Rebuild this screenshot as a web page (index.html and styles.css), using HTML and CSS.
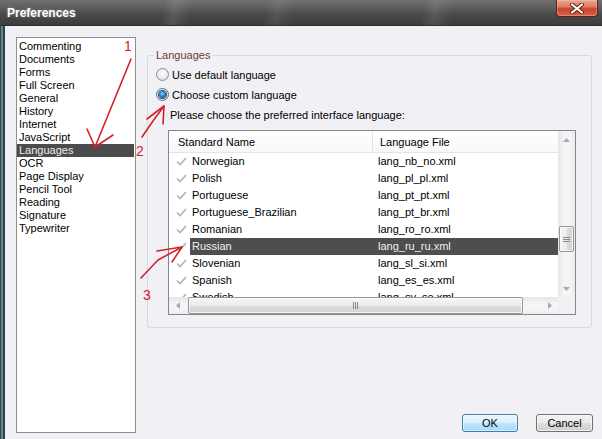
FILE: index.html
```html
<!DOCTYPE html>
<html>
<head>
<meta charset="utf-8">
<title>Preferences</title>
<link rel="stylesheet" href="styles.css">
</head>
<body>
<div class="window">
  <div class="titlebar">
    <span class="title">Preferences</span>
    <div class="close">
      <svg width="16" height="11" viewBox="0 0 16 11"><path d="M3 1.5 L13 9.5 M13 1.5 L3 9.5" stroke="#5a1e12" stroke-width="4" stroke-linecap="round" fill="none"/><path d="M3 1.5 L13 9.5 M13 1.5 L3 9.5" stroke="#ffffff" stroke-width="2.2" stroke-linecap="round" fill="none"/></svg>
    </div>
  </div>
  <div class="body">
    <div class="frame-left"></div>
    <div class="main">
      <ul class="cats">
        <li>Commenting</li>
        <li>Documents</li>
        <li>Forms</li>
        <li>Full Screen</li>
        <li>General</li>
        <li>History</li>
        <li>Internet</li>
        <li>JavaScript</li>
        <li class="sel">Languages</li>
        <li>OCR</li>
        <li>Page Display</li>
        <li>Pencil Tool</li>
        <li>Reading</li>
        <li>Signature</li>
        <li>Typewriter</li>
      </ul>
      <div class="right">
        <fieldset class="group">
          <legend>Languages</legend>
          <div class="radio-row first"><span class="radio"></span><span>Use default language</span></div>
          <div class="radio-row second"><span class="radio on"><span class="dot"></span></span><span>Choose custom language</span></div>
          <div class="prompt">Please choose the preferred interface language:</div>
          <div class="listview">
            <div class="lv-content">
              <div class="lv-header"><div class="h-name">Standard Name</div><div class="h-file">Language File</div></div>
              <div class="lv-row"><span class="chk"><svg width="11" height="9" viewBox="0 0 11 9"><path d="M1 4.5 L4 7.5 L10 1" stroke="#b2b2b2" stroke-width="1.6" fill="none"/></svg></span><span class="name">Norwegian</span><span class="file">lang_nb_no.xml</span></div>
              <div class="lv-row"><span class="chk"><svg width="11" height="9" viewBox="0 0 11 9"><path d="M1 4.5 L4 7.5 L10 1" stroke="#b2b2b2" stroke-width="1.6" fill="none"/></svg></span><span class="name">Polish</span><span class="file">lang_pl_pl.xml</span></div>
              <div class="lv-row"><span class="chk"><svg width="11" height="9" viewBox="0 0 11 9"><path d="M1 4.5 L4 7.5 L10 1" stroke="#b2b2b2" stroke-width="1.6" fill="none"/></svg></span><span class="name">Portuguese</span><span class="file">lang_pt_pt.xml</span></div>
              <div class="lv-row"><span class="chk"><svg width="11" height="9" viewBox="0 0 11 9"><path d="M1 4.5 L4 7.5 L10 1" stroke="#b2b2b2" stroke-width="1.6" fill="none"/></svg></span><span class="name">Portuguese_Brazilian</span><span class="file">lang_pt_br.xml</span></div>
              <div class="lv-row"><span class="chk"><svg width="11" height="9" viewBox="0 0 11 9"><path d="M1 4.5 L4 7.5 L10 1" stroke="#b2b2b2" stroke-width="1.6" fill="none"/></svg></span><span class="name">Romanian</span><span class="file">lang_ro_ro.xml</span></div>
              <div class="lv-row sel"><span class="chk"><svg width="11" height="9" viewBox="0 0 11 9"><path d="M1 4.5 L4 7.5 L10 1" stroke="#b2b2b2" stroke-width="1.6" fill="none"/></svg></span><span class="name">Russian</span><span class="file">lang_ru_ru.xml</span></div>
              <div class="lv-row"><span class="chk"><svg width="11" height="9" viewBox="0 0 11 9"><path d="M1 4.5 L4 7.5 L10 1" stroke="#b2b2b2" stroke-width="1.6" fill="none"/></svg></span><span class="name">Slovenian</span><span class="file">lang_sl_si.xml</span></div>
              <div class="lv-row"><span class="chk"><svg width="11" height="9" viewBox="0 0 11 9"><path d="M1 4.5 L4 7.5 L10 1" stroke="#b2b2b2" stroke-width="1.6" fill="none"/></svg></span><span class="name">Spanish</span><span class="file">lang_es_es.xml</span></div>
              <div class="lv-row"><span class="chk"><svg width="11" height="9" viewBox="0 0 11 9"><path d="M1 4.5 L4 7.5 L10 1" stroke="#b2b2b2" stroke-width="1.6" fill="none"/></svg></span><span class="name">Swedish</span><span class="file">lang_sv_se.xml</span></div>
            </div>
            <div class="vscroll">
              <div class="sbtn"><svg width="7" height="4" viewBox="0 0 7 4"><path d="M0 4 L3.5 0 L7 4 Z" fill="#a3acb4"/></svg></div>
              <div class="vtrack"><div class="vthumb"><svg width="7" height="7" viewBox="0 0 7 7"><path d="M0 1.5 H7 M0 3.5 H7 M0 5.5 H7" stroke="#8a8a8a" stroke-width="1"/></svg></div></div>
              <div class="sbtn"><svg width="7" height="4" viewBox="0 0 7 4"><path d="M0 0 L3.5 4 L7 0 Z" fill="#a3acb4"/></svg></div>
            </div>
            <div class="hscroll">
              <div class="sbtn"><svg width="4" height="7" viewBox="0 0 4 7"><path d="M4 0 L0 3.5 L4 7 Z" fill="#a3acb4"/></svg></div>
              <div class="htrack"><div class="hthumb"><svg width="7" height="7" viewBox="0 0 7 7"><path d="M1.5 0 V7 M3.5 0 V7 M5.5 0 V7" stroke="#8a8a8a" stroke-width="1"/></svg></div></div>
              <div class="sbtn"><svg width="4" height="7" viewBox="0 0 4 7"><path d="M0 0 L4 3.5 L0 7 Z" fill="#a3acb4"/></svg></div>
            </div>
            <div class="corner"></div>
          </div>
        </fieldset>
        <div class="buttons">
          <button class="btn ok">OK</button>
          <button class="btn cancel">Cancel</button>
        </div>
      </div>
    </div>
  </div>
  <svg class="annot" width="602" height="439" viewBox="0 0 602 439">
    <g stroke="#d2222a" stroke-width="1.6" fill="none" stroke-linecap="round" stroke-linejoin="round">
      <polyline points="131,59 113,103 95,147"/>
      <polyline points="87,129 95,147 113,135"/>
      <polyline points="142,137 153,121 164,106"/>
      <polyline points="147,119 164,106 163,124"/>
      <polyline points="141,278 158,260 182,247"/>
      <polyline points="157,251 182,247 172,262"/>
    </g>
    <g fill="#d2222a" font-family="Liberation Sans, Arial, sans-serif" font-size="14">
      <text x="124" y="51">1</text>
      <text x="136" y="156">2</text>
      <text x="143" y="300">3</text>
    </g>
  </svg>
</div>
</body>
</html>
```

FILE: styles.css
```css
* { box-sizing: border-box; }
html, body { margin: 0; padding: 0; }
body {
  width: 602px;
  height: 439px;
  overflow: hidden;
  font-family: "Liberation Sans", Arial, sans-serif;
  font-size: 11px;
  color: #000;
  background: #f0f0f5;
}
.window {
  position: relative;
  width: 602px;
  height: 439px;
  display: flex;
  flex-direction: column;
}
.titlebar {
  height: 26px;
  flex: none;
  display: flex;
  justify-content: space-between;
  align-items: flex-start;
  padding-left: 7px;
  padding-right: 4px;
  background:
    linear-gradient(100deg, transparent 0 27%, rgba(255,255,255,.10) 29%, transparent 32%, transparent 44%, rgba(255,255,255,.07) 46%, transparent 49%, transparent 70%, rgba(255,255,255,.09) 72%, transparent 75%),
    linear-gradient(#707070 0, #5e5e5e 30%, #4a4a4a 55%, #3d3d3d 100%);
  border-bottom: 1px solid #2f2f2f;
}
.title {
  font-weight: bold;
  font-size: 12px;
  line-height: 14px;
  margin-top: 6px;
  color: #fff;
  text-shadow: 0 0 3px rgba(255,255,255,.35);
}
.close {
  width: 42px;
  height: 17px;
  display: flex;
  align-items: center;
  justify-content: center;
  border: 1px solid #5c2418;
  border-top: none;
  border-radius: 0 0 4px 4px;
  background: linear-gradient(#eaa896 0, #df7e66 40%, #c9452a 55%, #d76245 100%);
  box-shadow: inset 0 0 0 1px rgba(255,210,190,.35);
}
.body {
  flex: 1;
  display: flex;
  min-height: 0;
}
.frame-left {
  width: 5px;
  flex: none;
  background: linear-gradient(to right, #34474e 0 1px, #5d8691 1px 3px, #2e4147 3px 5px);
}
.main {
  flex: 1;
  display: grid;
  grid-template-columns: 120px 1fr;
  column-gap: 11px;
  padding: 11px 9px 6px 11px;
}
.cats {
  list-style: none;
  margin: 0;
  padding: 2px 1px 0 0;
  border: 1px solid #8e8f8f;
  background: #fff;
  height: 396px;
}
.cats li {
  height: 13px;
  line-height: 13px;
  padding-left: 2px;
  white-space: nowrap;
}
.cats li.sel {
  background: #4b4b4b;
  color: #ececec;
}
.right {
  display: flex;
  flex-direction: column;
  height: 396px;
}
.group {
  margin: 11px 1px 0 0;
  padding: 0 15px 12px 0;
  border: 1px solid #d5dbe0;
  border-radius: 3px;
  min-width: 0;
}
.group legend {
  margin-left: 6px;
  padding: 0 2px;
  line-height: 14px;
  color: #6e3a2c;
}
.radio-row {
  display: flex;
  align-items: center;
  gap: 3px;
  height: 13px;
  margin-left: 8px;
}
.radio-row.first { margin-top: 6px; }
.radio-row.second { margin-top: 7px; }
.radio {
  width: 13px;
  height: 13px;
  border-radius: 50%;
  border: 1px solid #8c8f94;
  background: radial-gradient(circle at 50% 40%, #ffffff 0, #eeeeee 45%, #cfd1d4 100%);
  display: flex;
  align-items: center;
  justify-content: center;
  flex: none;
}
.radio.on { border-color: #5a6f84; }
.dot {
  width: 7px;
  height: 7px;
  border-radius: 50%;
  background: radial-gradient(circle at 45% 40%, #8fd0ff 0, #2a7dc4 45%, #0d3e70 100%);
  box-shadow: 0 0 0 1px #2b4b68;
}
.prompt {
  margin-top: 8px;
  margin-left: 22px;
  height: 13px;
  line-height: 13px;
}
.listview {
  margin-top: 8px;
  margin-left: 20px;
  height: 185px;
  border: 1px solid #828790;
  background: #fff;
  display: grid;
  grid-template-columns: 1fr 17px;
  grid-template-rows: 1fr 17px;
}
.lv-content {
  overflow: hidden;
  min-height: 0;
}
.lv-header {
  display: flex;
  height: 22px;
  border-bottom: 1px solid #e3e5e8;
  background: linear-gradient(#ffffff, #f7f8f9);
}
.h-name {
  width: 204px;
  padding: 1px 0 0 9px;
  line-height: 20px;
  border-right: 1px solid #e3e5e8;
}
.h-file {
  flex: 1;
  padding: 1px 0 0 7px;
  line-height: 20px;
}
.lv-row {
  display: flex;
  height: 17px;
  line-height: 17px;
  white-space: nowrap;
}
.chk {
  width: 21px;
  flex: none;
  display: flex;
  align-items: center;
  padding-left: 7px;
}
.name {
  width: 183px;
  flex: none;
  padding-left: 2px;
}
.file {
  flex: 1;
  padding-left: 5px;
}
.lv-row.sel .name,
.lv-row.sel .file {
  background: #4e4e4e;
  color: #f0f0f0;
}
.vscroll {
  grid-row: 1 / 2;
  grid-column: 2;
  display: flex;
  flex-direction: column;
  background: linear-gradient(to right, #e6e6e6, #f5f5f5 40%, #f5f5f5 70%, #ececec);
}
.sbtn {
  width: 17px;
  height: 17px;
  flex: none;
  display: flex;
  align-items: center;
  justify-content: center;
}
.vtrack {
  flex: 1;
  padding-top: 78px;
}
.vthumb {
  height: 26px;
  margin: 0 1px;
  border: 1px solid #979797;
  border-radius: 2px;
  background: linear-gradient(to right, #f6f6f6, #ebebeb 50%, #dcdcdc 51%, #d4d4d4);
  box-shadow: inset 0 0 0 1px rgba(255,255,255,.7);
  display: flex;
  align-items: center;
  justify-content: center;
}
.hscroll {
  grid-row: 2;
  grid-column: 1;
  display: flex;
  background: linear-gradient(#e6e6e6, #f5f5f5 40%, #f5f5f5 70%, #ececec);
}
.htrack {
  flex: 1;
  padding-left: 2px;
}
.hthumb {
  width: 335px;
  height: 17px;
  border: 1px solid #979797;
  border-radius: 2px;
  background: linear-gradient(#f6f6f6, #ebebeb 50%, #dcdcdc 51%, #d4d4d4);
  box-shadow: inset 0 0 0 1px rgba(255,255,255,.7);
  display: flex;
  align-items: center;
  justify-content: center;
}
.corner {
  grid-row: 2;
  grid-column: 2;
  background: #f0f0f0;
}
.buttons {
  margin-top: auto;
  margin-bottom: 1px;
  display: flex;
  justify-content: flex-end;
  gap: 18px;
}
.btn {
  height: 18px;
  padding: 0;
  font-family: "Liberation Sans", Arial, sans-serif;
  font-size: 11px;
  color: #000;
  border-radius: 3px;
  line-height: 16px;
}
.btn.ok {
  width: 56px;
  border: 1px solid #3c7fb1;
  background: linear-gradient(#eaf6fd 0, #d9f0fc 50%, #bee6fd 51%, #a7d9f5 100%);
  box-shadow: inset 0 0 0 1px rgba(255,255,255,.6);
}
.btn.cancel {
  width: 57px;
  border: 1px solid #707070;
  background: linear-gradient(#f2f2f2 0, #ebebeb 50%, #dddddd 51%, #cfcfcf 100%);
  box-shadow: inset 0 0 0 1px rgba(255,255,255,.7);
}
.annot {
  position: absolute;
  left: 0;
  top: 0;
  pointer-events: none;
}
```
